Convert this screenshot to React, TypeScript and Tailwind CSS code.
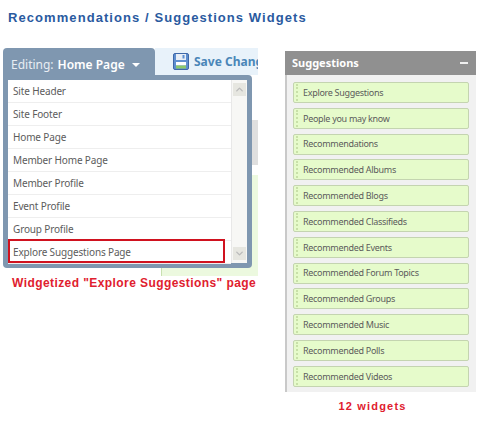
import { ChevronDown, ChevronUp } from 'lucide-react'

const pages = [
    'Site Header',
    'Site Footer',
    'Home Page',
    'Member Home Page',
    'Member Profile',
    'Event Profile',
    'Group Profile',
    'Explore Suggestions Page',
]

const widgets = [
    'Explore Suggestions',
    'People you may know',
    'Recommendations',
    'Recommended Albums',
    'Recommended Blogs',
    'Recommended Classifieds',
    'Recommended Events',
    'Recommended Forum Topics',
    'Recommended Groups',
    'Recommended Music',
    'Recommended Polls',
    'Recommended Videos',
]

function SaveIcon() {
    return (
        <svg width="16" height="17" viewBox="0 0 16 17" className="shrink-0">
            <rect x="0.5" y="0.5" width="15" height="16" rx="1.5" fill="#5f8fd0" stroke="#3f68a8" />
            <rect x="3" y="1" width="10" height="6" fill="#e8eef6" />
            <rect x="9.5" y="2" width="2" height="3.5" fill="#5f8fd0" />
            <rect x="3" y="9" width="10" height="3.5" fill="#ffffff" />
            <rect x="3" y="12.5" width="10" height="3" fill="#8cc86a" />
        </svg>
    )
}

function EditorPanel() {
    return (
        <div className="relative w-[255px] h-[228px]">
            <div className="ml-[152px] w-[103px] h-[27px] bg-[#e8f2fa] flex items-center pl-[18px] gap-[5px] overflow-hidden whitespace-nowrap">
                <SaveIcon />
                <span className="text-[12px] font-bold text-[#4a86b8] font-['Noto_Sans',sans-serif]">Save Changes</span>
            </div>
            {/* page behind the dropdown, only its edge shows */}
            <div className="ml-[158px] mt-[45px] h-[45px] bg-[#dfdfdf]" />
            <div className="ml-[158px] mt-[10px] h-[101px] bg-[#ecf9df] border-l border-[#c8e0b0]" />

            <div className="absolute left-0 top-0 w-[152px] h-[33px] bg-[#7f97b0] rounded-t-[4px] flex items-center pl-[8px] text-[12px] text-[#e8edf3] font-['Noto_Sans',sans-serif] whitespace-nowrap">
                <span>Editing:</span>
                <span className="ml-[4px] font-semibold text-white">Home Page</span>
                <span className="ml-[7px] w-0 h-0 border-x-[4px] border-x-transparent border-t-[4px] border-t-white" />
            </div>
            <div className="absolute left-0 top-[27px] w-[249px] h-[193px] bg-[#7f97b0] rounded-[4px] rounded-tl-none p-[5px]">
                <div className="relative h-full bg-white flex">
                    <div className="flex-1 flex flex-col">
                        {pages.map(page => (
                            <div key={page} className="h-[23px] shrink-0 flex items-center pl-[5px] border-b border-[#eeeeee] text-[10px] tracking-[-0.15px] text-[#5c5c5c] font-['Noto_Sans',sans-serif] whitespace-nowrap">
                                {page}
                            </div>
                        ))}
                    </div>
                    <div className="w-[16px] bg-[#f7f7f5] border-l border-[#e8e8e8] flex flex-col justify-between items-center py-[3px]">
                        <div className="w-[13px] h-[13px] bg-[#e6e6e0] flex items-center justify-center">
                            <ChevronUp size={11} strokeWidth={3} className="text-[#bbb]" />
                        </div>
                        <div className="w-[13px] h-[13px] bg-[#e6e6e0] flex items-center justify-center">
                            <ChevronDown size={11} strokeWidth={3} className="text-[#bbb]" />
                        </div>
                    </div>
                    <div className="absolute left-0 bottom-0 w-[217px] h-[24px] border-2 border-[#d0121f]" />
                </div>
            </div>
        </div>
    )
}

function SuggestionsPanel() {
    return (
        <div className="w-[191px] flex flex-col">
            <div className="h-[24px] bg-[#909090] flex items-center justify-between pl-[7px] pr-[8px] text-white">
                <span className="text-[11px] font-bold font-['Noto_Sans',sans-serif]">Suggestions</span>
                <span className="w-[8px] h-[2px] bg-[#f0f0f0]" />
            </div>
            <div className="h-[317px] bg-[#f1f1f1] border-l-2 border-[#c9c9c9] pl-[6px] pr-[7px] pt-[7px] flex flex-col gap-[4.8px]">
                {widgets.map(widget => (
                    <div key={widget} className="h-[21px] shrink-0 bg-[#e6fbcb] border border-[#c4d4b0] rounded-[2px] flex items-center text-[9px] tracking-[-0.3px] text-[#5c5c5c] font-['Noto_Sans',sans-serif] whitespace-nowrap">
                        <span className="ml-[2px] mr-[5px] w-[2px] h-[17px] border-l-2 border-dotted border-[#c8e0a8]" />
                        {widget}
                    </div>
                ))}
            </div>
        </div>
    )
}

export default function App() {
    return (
        <div className="w-[480px] h-[425px] bg-white overflow-hidden font-['Liberation_Sans',sans-serif]">
            <h1 className="pt-[10px] pl-[8px] h-[48px] text-[13px] leading-[15px] font-bold text-[#2a5a9f] tracking-[1.07px]">
                Recommendations / Suggestions Widgets
            </h1>
            <div className="flex items-start">
                <div className="ml-[3px] w-[255px]">
                    <EditorPanel />
                    <p className="ml-[9px] text-[12px] leading-[15px] font-bold text-[#e0202e] tracking-[0.42px] whitespace-nowrap">
                        Widgetized "Explore Suggestions" page
                    </p>
                </div>
                <div className="ml-[27px] mt-[3px]">
                    <SuggestionsPanel />
                    <p className="mt-[7px] pr-[16px] text-center text-[11px] leading-[14px] font-bold text-[#e0202e] tracking-[1.2px]">12 widgets</p>
                </div>
            </div>
        </div>
    )
}
